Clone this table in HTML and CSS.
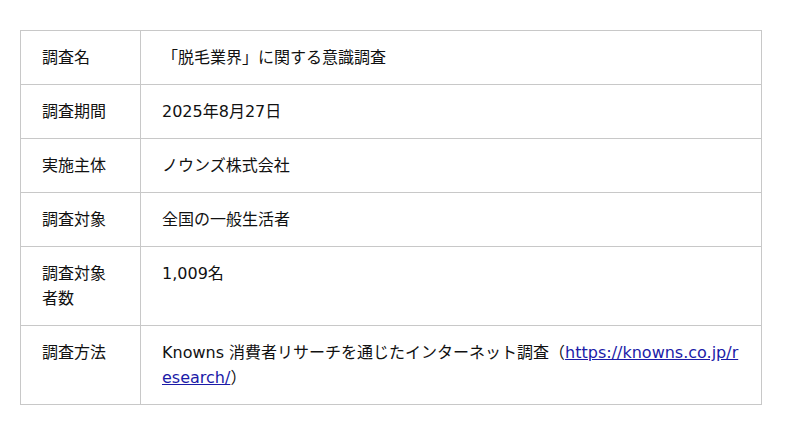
FILE: index.html
```html
<!DOCTYPE html>
<html lang="ja">
<head>
<meta charset="utf-8">
<link rel="stylesheet" href="styles.css">
</head>
<body>
<table class="survey">
  <tr><th>調査名</th><td>「脱毛業界」に関する意識調査</td></tr>
  <tr><th>調査期間</th><td>2025年8月27日</td></tr>
  <tr><th>実施主体</th><td>ノウンズ株式会社</td></tr>
  <tr><th>調査対象</th><td>全国の一般生活者</td></tr>
  <tr><th>調査対象者数</th><td>1,009名</td></tr>
  <tr><th>調査方法</th><td class="wrap">Knowns 消費者リサーチを通じたインターネット調査（<a href="#">https://knowns.co.jp/research/</a>）</td></tr>
</table>
</body>
</html>
```
FILE: styles.css
```css
html, body { margin: 0; background: #fff; }
body { padding: 30px 20px; font-family: "DejaVu Sans", "Noto Sans CJK JP", sans-serif; font-size: 16px; line-height: 25px; color: #111; }
.survey { border-collapse: collapse; width: 742px; table-layout: fixed; }
.survey th, .survey td { border: 1px solid #c8c8c8; padding: 14px 21px 14px 21px; text-align: left; vertical-align: top; font-weight: normal; }
.survey th { width: 77px; }
.wrap { word-break: break-all; }
.survey a { color: #1b1ba8; text-decoration: underline; }
```
